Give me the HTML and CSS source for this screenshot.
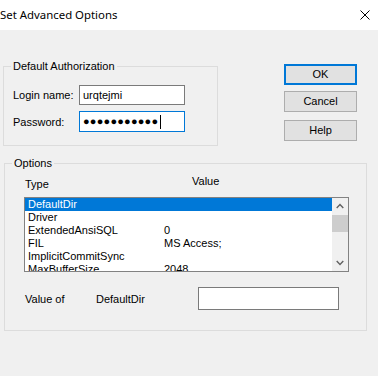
FILE: index.html
```html
<!DOCTYPE html>
<html>
<head>
<meta charset="utf-8">
<link rel="stylesheet" href="styles.css">
</head>
<body>
<div class="titlebar">
  <span class="title">Set Advanced Options</span>
  <svg class="close" width="10" height="10" viewBox="0 0 10 10"><path d="M0.5 0.5 L9.5 9.5 M9.5 0.5 L0.5 9.5" stroke="#000" stroke-width="1" fill="none"/></svg>
</div>
<div class="top">
  <div class="group auth">
    <span class="legend">Default Authorization</span>
    <div class="form">
      <label class="lbl">Login name:</label>
      <div class="input">urqtejmi</div>
      <label class="lbl">Password:</label>
      <div class="input focus">●●●●●●●●●●●<span class="caret"></span></div>
    </div>
  </div>
  <div class="buttons">
    <div class="btn default">OK</div>
    <div class="btn">Cancel</div>
    <div class="btn help">Help</div>
  </div>
</div>
<div class="group options">
  <span class="legend">Options</span>
  <div class="header">
    <span class="h-type">Type</span>
    <span class="h-value">Value</span>
  </div>
  <div class="list">
    <div class="rows">
      <div class="row sel"><span class="c1">DefaultDir</span><span></span></div>
      <div class="row"><span class="c1">Driver</span><span></span></div>
      <div class="row"><span class="c1">ExtendedAnsiSQL</span><span>0</span></div>
      <div class="row"><span class="c1">FIL</span><span>MS Access;</span></div>
      <div class="row"><span class="c1">ImplicitCommitSync</span><span></span></div>
      <div class="row"><span class="c1">MaxBufferSize</span><span>2048</span></div>
    </div>
    <div class="scroll">
      <svg class="arrow" width="17" height="17" viewBox="0 0 17 17"><path d="M5 10 L8.5 6.5 L12 10" stroke="#606060" stroke-width="1.5" fill="none"/></svg>
      <div class="thumb"></div>
      <div class="spacer"></div>
      <svg class="arrow" width="17" height="17" viewBox="0 0 17 17"><path d="M5 7 L8.5 10.5 L12 7" stroke="#606060" stroke-width="1.5" fill="none"/></svg>
    </div>
  </div>
  <div class="valrow">
    <span class="v1">Value of</span>
    <span class="v2">DefaultDir</span>
    <div class="input wide"></div>
  </div>
</div>
</body>
</html>
```

FILE: styles.css
```css
html, body {
  margin: 0;
  padding: 0;
  background: #f0f0f0;
  width: 378px;
  height: 376px;
  overflow: hidden;
  font-family: "Liberation Sans", Arial, sans-serif;
  font-size: 11px;
  color: #000;
}
.titlebar {
  height: 30px;
  background: #fff;
  display: flex;
  align-items: center;
}
.title {
  font-family: "Noto Sans", sans-serif;
  font-size: 11.4px;
  padding-left: 0;
  margin-top: -1px;
}
.close {
  margin-left: auto;
  margin-right: 8px;
  margin-top: 0px;
}
.top {
  display: flex;
  align-items: flex-start;
}
.group {
  position: relative;
  border: 1px solid #dcdcdc;
  box-sizing: border-box;
}
.legend {
  position: absolute;
  top: -7px;
  left: 7px;
  padding: 0 2px;
  background: #f0f0f0;
  line-height: 13px;
}
.auth {
  margin-left: 3px;
  margin-top: 36px;
  width: 215px;
  height: 80px;
}
.form {
  display: grid;
  grid-template-columns: 66px 106px;
  row-gap: 6px;
  padding: 18px 0 0 9px;
  align-items: center;
}
.input {
  box-sizing: border-box;
  height: 20px;
  border: 1px solid #7a7a7a;
  background: #fff;
  line-height: 18px;
  padding-left: 3px;
  white-space: nowrap;
  overflow: hidden;
}
.input.focus {
  border-color: #0078d7;
  height: 21px;
  font-size: 11px;
  letter-spacing: 0.2px;
  line-height: 19px;
  display: flex;
  align-items: center;
}
.caret {
  display: inline-block;
  width: 1px;
  height: 14px;
  background: #000;
  margin-left: 2px;
}
.buttons {
  display: flex;
  flex-direction: column;
  margin-left: 66px;
  margin-top: 34px;
  width: 73px;
}
.btn {
  box-sizing: border-box;
  height: 21px;
  background: #e1e1e1;
  border: 1px solid #adadad;
  text-align: center;
  line-height: 19px;
  margin-bottom: 6px;
}
.btn.default {
  border: 2px solid #0078d7;
  line-height: 17px;
}
.btn.help {
  margin-top: 2px;
}
.options {
  margin-left: 4px;
  margin-top: 16px;
  width: 363px;
  height: 168px;
}
.header {
  display: flex;
  padding-left: 20px;
  margin-top: 11px;
  line-height: 13px;
}
.h-type {
  width: 167px;
  padding-top: 3px;
}
.list {
  margin-left: 19px;
  margin-top: 6px;
  width: 325px;
  height: 75px;
  box-sizing: border-box;
  border: 1px solid #828282;
  background: #fff;
  display: flex;
}
.rows {
  width: 307px;
  overflow: hidden;
}
.row {
  height: 13px;
  line-height: 13px;
  display: flex;
  padding-left: 3px;
  white-space: nowrap;
}
.row .c1 {
  width: 136px;
  flex: none;
}
.row.sel {
  background: #0078d7;
  color: #fff;
}
.scroll {
  width: 16px;
  background: #f0f0f0;
  display: flex;
  flex-direction: column;
}
.arrow {
  width: 16px;
  height: 17px;
  flex: none;
}
.thumb {
  height: 17px;
  background: #cdcdcd;
  flex: none;
}
.spacer {
  flex: 1;
}
.valrow {
  display: flex;
  align-items: center;
  margin-top: 15px;
  padding-left: 20px;
}
.v1 {
  width: 71px;
}
.v2 {
  width: 102px;
}
.input.wide {
  width: 141px;
  height: 23px;
}
```
